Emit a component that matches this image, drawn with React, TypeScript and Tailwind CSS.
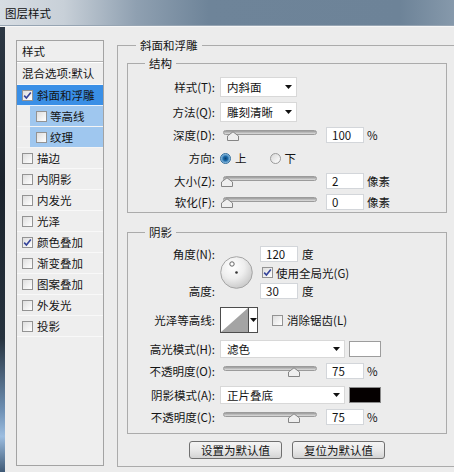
import React from "react";

type Effect = { label: string; checked?: boolean; kind?: "active" | "sub" };

const effects: Effect[] = [
  { label: "斜面和浮雕", checked: true, kind: "active" },
  { label: "等高线", kind: "sub" },
  { label: "纹理", kind: "sub" },
  { label: "描边" },
  { label: "内阴影" },
  { label: "内发光" },
  { label: "光泽" },
  { label: "颜色叠加", checked: true },
  { label: "渐变叠加" },
  { label: "图案叠加" },
  { label: "外发光" },
  { label: "投影" },
];

function Check({ checked = false }: { checked?: boolean }) {
  return (
    <span className="w-[11px] h-[11px] shrink-0 border border-[#939393] bg-gradient-to-br from-[#dedede] to-white flex items-center justify-center">
      {checked && (
        <svg width="9" height="9" viewBox="0 0 9 9">
          <path d="M1.2 4.6 L3.4 7 L7.8 1.4" fill="none" stroke="#34439a" strokeWidth="1.6" />
        </svg>
      )}
    </span>
  );
}

function Radio({ on = false }: { on?: boolean }) {
  return on ? (
    <span className="block w-[11px] h-[11px] shrink-0 rounded-full border border-[#2f6c9c] bg-[radial-gradient(circle_at_50%_50%,#0b3f6e_0%,#1c6aa8_35%,#9cc9ea_75%,#dcecf7_100%)]" />
  ) : (
    <span className="block w-[11px] h-[11px] shrink-0 rounded-full border border-[#9a9a9a] bg-gradient-to-br from-[#d8d8d8] to-white" />
  );
}

function Arrow() {
  return (
    <svg width="7" height="4" viewBox="0 0 7 4" className="shrink-0">
      <path d="M0 0 H7 L3.5 4 Z" fill="#111" />
    </svg>
  );
}

function Field({ value }: { value: string }) {
  return (
    <div className="w-[38px] h-[16px] shrink-0 bg-white border border-[#d3d6da] pl-[5px] leading-[14px]">
      {value}
    </div>
  );
}

function Select({ value, w }: { value: string; w: string }) {
  return (
    <div className={`${w} h-full shrink-0 bg-white border border-[#d8d8d8] flex items-center justify-between pl-[6px] pr-[4px]`}>
      <span>{value}</span>
      <Arrow />
    </div>
  );
}

function Slider({ pos }: { pos: number }) {
  return (
    <div className="relative w-[94px] h-[16px] shrink-0">
      <div className="absolute left-0 right-0 top-[3px] h-[5px] rounded-full border border-[#9b9b9b] bg-gradient-to-b from-[#9a9a9a] to-[#dedede]" />
      <svg
        className="absolute top-[4px]"
        style={{ left: pos - 6 }}
        width="12"
        height="10"
        viewBox="0 0 12 10"
      >
        <path d="M0.5 9.5 V5 L6 0.8 L11.5 5 V9.5 Z" fill="#efefef" stroke="#858585" />
      </svg>
    </div>
  );
}

function Row({
  label,
  className = "",
  children,
}: {
  label: string;
  className?: string;
  children: React.ReactNode;
}) {
  return (
    <div className={`flex items-center ${className}`}>
      <div className="w-[87px] shrink-0 text-right">{label}</div>
      <div className="ml-[5px] flex items-center h-full">{children}</div>
    </div>
  );
}

function SliderRow({ label, pos, value, unit, className }: { label: string; pos: number; value: string; unit: string; className: string }) {
  return (
    <Row label={label} className={`h-[16px] ${className}`}>
      <div className="ml-[3px]">
        <Slider pos={pos} />
      </div>
      <div className="ml-[9px]">
        <Field value={value} />
      </div>
      <span className="ml-[3px]">{unit}</span>
    </Row>
  );
}

function Dial() {
  return (
    <svg width="33" height="33" viewBox="0 0 33 33" className="shrink-0">
      <defs>
        <radialGradient id="dialg" cx="0.38" cy="0.32" r="0.75">
          <stop offset="0" stopColor="#ffffff" />
          <stop offset="0.5" stopColor="#eeeeee" />
          <stop offset="1" stopColor="#c4c4c4" />
        </radialGradient>
      </defs>
      <circle cx="16.5" cy="16.5" r="15.8" fill="url(#dialg)" stroke="#a5a5a5" />
      <circle cx="12" cy="8" r="2.2" fill="#fff" stroke="#555" strokeWidth="0.9" />
      <circle cx="16.5" cy="16.5" r="1.3" fill="#333" />
    </svg>
  );
}

function LeftPanel() {
  return (
    <div className="w-[88px] h-[426px] mt-[13px] ml-[11px] shrink-0 border border-[#a3a3a3] bg-[#eeeeee] flex flex-col">
      <div className="h-[21px] flex items-center pl-[5px] border-b border-[#b3b3b3] shadow-[0_1px_0_#ffffff]">样式</div>
      <div className="h-[23px] flex items-center pl-[5px] border-b border-[#f8f8f8] whitespace-nowrap">混合选项:默认</div>
      {effects.map((e) =>
        e.kind === "sub" ? (
          <div key={e.label} className="h-[21px] flex border-b border-[#f4f4f4]">
            <div className="w-[13px] shrink-0" />
            <div className="flex-1 bg-[#9fc7ef] flex items-center pl-[6px] gap-[3px]">
              <Check checked={e.checked} />
              <span>{e.label}</span>
            </div>
          </div>
        ) : (
          <div
            key={e.label}
            className={`h-[21px] flex items-center pl-[5px] gap-[4px] border-b ${
              e.kind === "active" ? "bg-[#3a8fe6] border-[#e8f1fb]" : "border-[#f8f8f8]"
            }`}
          >
            <Check checked={e.checked} />
            <span>{e.label}</span>
          </div>
        )
      )}
    </div>
  );
}

export default function App() {
  return (
    <div className="w-[454px] h-[472px] overflow-hidden bg-[#ececec] flex flex-col text-[11.5px] leading-[16px] text-[#141414] font-['Noto_Sans_CJK_SC','Noto_Sans',sans-serif]">
      {/* title bar */}
      <div className="h-[26px] shrink-0 border-b border-[#97a5b3] bg-[linear-gradient(90deg,#d7dde3_0%,#c8d0d8_14%,#8fa0b1_30%,#6e8499_46%,#6d8398_88%,#8699ab_100%)] flex items-center pl-[5px] text-[#111]">
        图层样式
      </div>
      <div className="flex flex-1 border-t border-[#f6f6f6]">
        <div className="w-[5px] shrink-0 bg-[linear-gradient(180deg,#2d3844_0%,#1b232c_35%,#26323e_70%,#6d8fb3_86%,#9cbde0_92%,#3f5a76_100%)]" />
        <div className="flex items-start">
          <LeftPanel />

          <fieldset className="ml-[13px] mt-[10px] w-[345px] shrink-0 border border-[#ababab] pl-[9px] pb-[7px]">
            <legend className="ml-[9px] px-[4px] leading-[16px]">斜面和浮雕</legend>

            <fieldset className="mt-[2px] w-[320px] border border-[#ababab] pb-[2px]">
              <legend className="ml-[17px] px-[4px] leading-[16px]">结构</legend>
              <Row label="样式(T):" className="h-[20px] mt-[6px]">
                <Select value="内斜面" w="w-[77px]" />
              </Row>
              <Row label="方法(Q):" className="h-[20px] mt-[5px]">
                <Select value="雕刻清晰" w="w-[77px]" />
              </Row>
              <SliderRow label="深度(D):" pos={10} value="100" unit="%" className="mt-[5px]" />
              <Row label="方向:" className="h-[16px] mt-[7px]">
                <Radio on />
                <span className="ml-[4px]">上</span>
                <span className="ml-[23px]">
                  <Radio />
                </span>
                <span className="ml-[4px]">下</span>
              </Row>
              <SliderRow label="大小(Z):" pos={4} value="2" unit="像素" className="mt-[7px]" />
              <SliderRow label="软化(F):" pos={4} value="0" unit="像素" className="mt-[5px]" />
            </fieldset>

            <fieldset className="mt-[11px] w-[320px] border border-[#ababab] pb-[8px]">
              <legend className="ml-[17px] px-[4px] leading-[16px]">阴影</legend>

              <div className="flex mt-[6px]">
                <div className="w-[87px] shrink-0 flex flex-col items-end">
                  <div className="h-[16px]">角度(N):</div>
                  <div className="h-[21px]" />
                  <div className="h-[16px]">高度:</div>
                </div>
                <div className="ml-[5px] mt-[10px]">
                  <Dial />
                </div>
                <div className="ml-[7px] flex flex-col">
                  <div className="h-[16px] flex items-center">
                    <Field value="120" />
                    <span className="ml-[4px]">度</span>
                  </div>
                  <div className="h-[21px] flex items-center pl-[2px]">
                    <Check checked />
                    <span className="ml-[3px]">使用全局光(G)</span>
                  </div>
                  <div className="h-[16px] flex items-center">
                    <Field value="30" />
                    <span className="ml-[4px]">度</span>
                  </div>
                </div>
              </div>

              <Row label="光泽等高线:" className="h-[26px] mt-[8px]">
                <div className="w-[38px] h-[26px] flex border border-[#4d4d4d] bg-white">
                  <svg width="27" height="24" viewBox="0 0 27 24" className="shrink-0">
                    <polygon points="0,24 27,0 27,24" fill="#a4a4a4" />
                  </svg>
                  <div className="flex-1 border-l border-[#4d4d4d] flex items-center justify-center">
                    <Arrow />
                  </div>
                </div>
                <span className="ml-[14px]">
                  <Check />
                </span>
                <span className="ml-[4px]">消除锯齿(L)</span>
              </Row>

              <Row label="高光模式(H):" className="h-[18px] mt-[7px]">
                <Select value="滤色" w="w-[125px]" />
                <div className="ml-[4px] w-[32px] h-[16px] bg-white border border-[#9d9d9d]" />
              </Row>
              <SliderRow label="不透明度(O):" pos={71} value="75" unit="%" className="mt-[5px]" />
              <Row label="阴影模式(A):" className="h-[18px] mt-[7px]">
                <Select value="正片叠底" w="w-[125px]" />
                <div className="ml-[4px] w-[32px] h-[16px] bg-[#050000] border border-[#8a8a8a]" />
              </Row>
              <SliderRow label="不透明度(C):" pos={71} value="75" unit="%" className="mt-[5px]" />
            </fieldset>

            <div className="flex gap-[10px] ml-[62px] mt-[7px]">
              <div className="w-[93px] h-[18px] rounded-[3px] border border-[#707070] bg-gradient-to-b from-[#f4f4f4] via-[#e9e9e9] to-[#d4d4d4] flex items-center justify-center">
                设置为默认值
              </div>
              <div className="w-[93px] h-[18px] rounded-[3px] border border-[#707070] bg-gradient-to-b from-[#f4f4f4] via-[#e9e9e9] to-[#d4d4d4] flex items-center justify-center">
                复位为默认值
              </div>
            </div>
          </fieldset>
        </div>
      </div>
    </div>
  );
}
